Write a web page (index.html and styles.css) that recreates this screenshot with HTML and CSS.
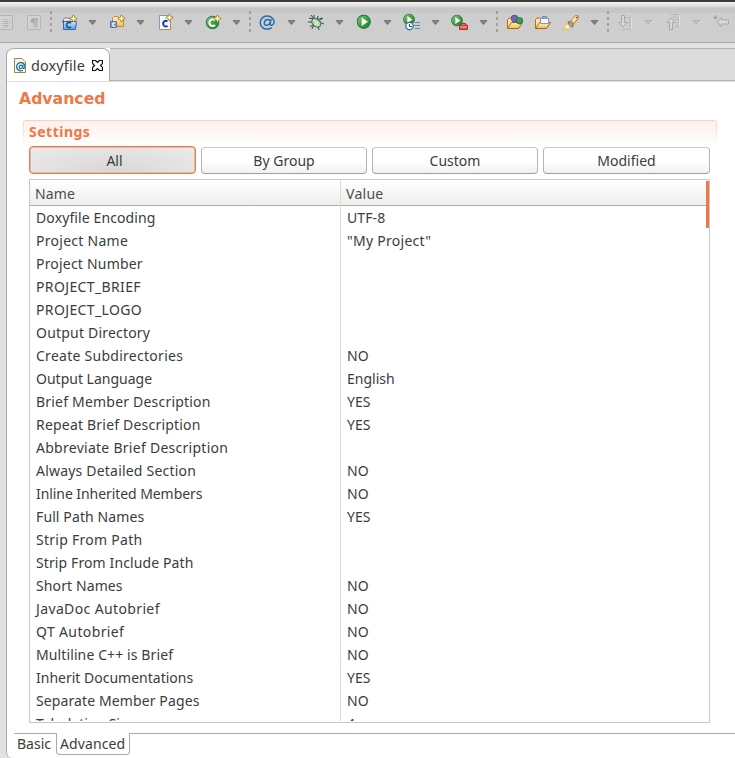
FILE: index.html
```html
<!DOCTYPE html>
<html lang="en">
<head>
<meta charset="utf-8">
<title>doxyfile</title>
<link rel="stylesheet" href="styles.css">
</head>
<body>
<svg class="defs" width="0" height="0">
  <defs>
    <linearGradient id="blue" x1="0" y1="0" x2="0" y2="1"><stop offset="0" stop-color="#d4e6fa"/><stop offset="1" stop-color="#5f9be0"/></linearGradient>
    <linearGradient id="gold" x1="0" y1="0" x2="0" y2="1"><stop offset="0" stop-color="#fff3c4"/><stop offset="1" stop-color="#f3ba5c"/></linearGradient>
    <linearGradient id="green" x1="0" y1="0" x2="1" y2="1"><stop offset="0" stop-color="#8cc885"/><stop offset=".5" stop-color="#43a047"/><stop offset="1" stop-color="#1f7a35"/></linearGradient>
    <symbol id="spark" viewBox="0 0 8 8"><path d="M4 0L5.200 2.800L8 4L5.200 5.200L4 8L2.800 5.200L0 4L2.800 2.800Z" fill="#fff3a8" stroke="#ad831c" stroke-width="1"/><path d="M4 1.500V6.500M1.500 4H6.500" stroke="#fff8c8" stroke-width="1"/></symbol>
    <symbol id="play" viewBox="0 0 14 14"><circle cx="7" cy="7" r="6.400" fill="url(#green)" stroke="#27803a"/><path d="M5 3L11 7L5 11Z" fill="#fff"/></symbol>
    <symbol id="down" viewBox="0 0 24 24"><path d="M8 10.500H15L11.500 14.700Z" fill="#828282" stroke="#707070" stroke-width=".8"/></symbol>
    <symbol id="down-off" viewBox="0 0 24 24"><path d="M8 10.500H15.500L11.800 14.500Z" fill="#c3c3c3" stroke="#aaa" stroke-width=".8"/><path d="M12.500 15L16.300 10.500" stroke="#eee" stroke-width=".8"/></symbol>
    <symbol id="folder" viewBox="0 0 24 24"><path d="M4.500 18.500V9.500L6 8H9.500L11 9.500H17.500V12" fill="#ffe39b" stroke="#b56e20"/><path d="M4.500 18.500L8.500 12.500H19.500L15.500 18.500Z" fill="url(#gold)" stroke="#a9641c"/></symbol>
  </defs>
</svg>
<header class="titlebar"></header>
<nav class="toolbar">
  <svg class="icon first" viewBox="0 0 24 24"><path d="M5.500 5.500H18.500V19.500H5.500Z" fill="#d2d2d2" stroke="#b5b5b5"/><path d="M9 9.500H15M9 17H15M8.500 11V16M15.500 11V16" stroke="#b0b0b0" stroke-dasharray="1 1"/><path d="M10 11.500H14M10 13.500H14M10 15.500H14" stroke="#aaa"/></svg>
  <svg class="icon second" viewBox="0 0 24 24"><path d="M5.500 5.500H18.500V19.500H5.500Z" fill="#d2d2d2" stroke="#b7b7b7"/><path d="M12 8.500H10A2.500 2.500 0 0 0 10 13H12Z" fill="#aaa"/><path d="M10 9H16M12.500 9V17.500M14.800 9V17.500" stroke="#aaa" stroke-width="1.300"/></svg>
  <i class="sep"></i>
  <svg class="icon" viewBox="0 0 24 24"><path d="M6.500 11V9L8 8H12L13 9.500" fill="#eee" stroke="#a96b5c"/><path d="M5 11.500H19.500L18.500 19.500H6.500V12Z" fill="url(#blue)" stroke="#3564b4"/><path d="M14 13.200A2.600 2.600 0 1 0 14 16.800" fill="none" stroke="#175a92" stroke-width="1.700"/><use href="#spark" x="12.500" y="4.500" width="8" height="8"/></svg>
  <svg class="icon" viewBox="0 0 24 24"><use href="#down"/></svg>
  <svg class="icon" viewBox="0 0 24 24"><path d="M7.500 16.500V8L9 6.500H13L14.500 8.500H18.500V16.500Z" fill="url(#gold)" stroke="#cb8a34"/><path d="M5.500 11.500H11.500V17.500H5.500Z" fill="#739bd0" stroke="#4d78b4"/><path d="M10.200 13.200A1.700 1.700 0 1 0 10.200 16" fill="none" stroke="#fff" stroke-width="1.200"/><use href="#spark" x="12.500" y="4.500" width="8" height="8"/></svg>
  <svg class="icon" viewBox="0 0 24 24"><use href="#down"/></svg>
  <svg class="icon" viewBox="0 0 24 24"><path d="M6.500 5.500H17.500V19.500H6.500Z" fill="#f7faff" stroke="#8497b6"/><path d="M17.500 12V19.500H7" fill="none" stroke="#b48f42"/><path d="M14.500 11.500A2.600 2.800 0 1 0 14.500 15.800" fill="none" stroke="#263fb2" stroke-width="2"/><use href="#spark" x="12.500" y="3.500" width="8" height="8"/></svg>
  <svg class="icon" viewBox="0 0 24 24"><use href="#down"/></svg>
  <svg class="icon" viewBox="0 0 24 24"><circle cx="11.500" cy="12.500" r="6.300" fill="url(#green)" stroke="#287b45"/><path d="M14 10.300A3.300 3.300 0 1 0 14 15" fill="none" stroke="#fff" stroke-width="2"/><use href="#spark" x="12.500" y="4.500" width="8" height="8"/></svg>
  <svg class="icon" viewBox="0 0 24 24"><use href="#down"/></svg>
  <i class="sep"></i>
  <svg class="icon" viewBox="0 0 24 24"><path d="M15.800 17.600A7 6.600 0 1 1 18.200 12C18 15.300 14.300 16.300 14.200 14L15 9.200M14.500 12C14 8.300 9 8.700 8.300 12.700C8 16.300 13 16.400 14.500 12" fill="none" stroke="#216fae" stroke-width="1.500"/></svg>
  <svg class="icon" viewBox="0 0 24 24"><use href="#down"/></svg>
  <svg class="icon" viewBox="0 0 24 24"><path d="M10 5V9L5 8M14 6L13 10L18 8M4 12H9M15 12L20 14M6 17L10 14L8 19M14 15L15 20M16 10L19 8M7 5L10 9" fill="none" stroke="#254e4d"/><ellipse cx="12.300" cy="12.800" rx="5" ry="3.700" transform="rotate(42 12.300 12.800)" fill="#b7d59b" stroke="#31636a"/><path d="M9.500 9.500L15 16M14 12L11 15" stroke="#f0f7c7"/></svg>
  <svg class="icon" viewBox="0 0 24 24"><use href="#down"/></svg>
  <svg class="icon" viewBox="0 0 24 24"><use href="#play" x="4.500" y="4.500" width="14.500" height="14.500"/></svg>
  <svg class="icon" viewBox="0 0 24 24"><use href="#down"/></svg>
  <svg class="icon" viewBox="0 0 24 24"><use href="#play" x="3" y="3.500" width="12" height="12"/><circle cx="9.500" cy="16" r="3.700" fill="#fff" stroke="#226b98" stroke-width="1.200"/><path d="M9.500 14V16.500H12" fill="none" stroke="#174b78"/><path d="M15 12.500H20M14 15.500H20M15 18.500H20" stroke="#6483bd"/></svg>
  <svg class="icon" viewBox="0 0 24 24"><use href="#down"/></svg>
  <svg class="icon" viewBox="0 0 24 24"><use href="#play" x="3" y="4.500" width="12" height="12"/><path d="M13.500 15V13.500H17.500V15" fill="none" stroke="#b52c27"/><path d="M11.500 15H19.500V19.500H11.500Z" fill="#d9524a" stroke="#b32e29"/><path d="M12 17H19" stroke="#f6b2a8"/></svg>
  <svg class="icon" viewBox="0 0 24 24"><use href="#down"/></svg>
  <i class="sep"></i>
  <svg class="icon" viewBox="0 0 24 24"><use href="#folder"/><circle cx="11.500" cy="8.500" r="3.300" fill="#7465b0" stroke="#5a4d96"/><circle cx="16.500" cy="10.800" r="3.200" fill="#3e9c59" stroke="#24783f"/></svg>
  <svg class="icon gap" viewBox="0 0 24 24"><use href="#folder"/><path d="M9.500 8.500H17.500V13.500H9.500Z" fill="#f5f8ff" stroke="#7f96bd"/><path d="M11.500 8V6.500H15.500V8" fill="#9fb6d5" stroke="#7189b0"/></svg>
  <svg class="icon gap" viewBox="0 0 24 24"><path d="M11.500 11.500L16.500 5.500L19.500 6L19 9L14.500 14Z" fill="#ffd179" stroke="#b77a24"/><path d="M14 10L17.500 6.500" stroke="#fff1bd" stroke-width="1.500"/><path d="M9 12L12 11.500L14.500 14L13.500 17L10.500 16Z" fill="#a8a09d" stroke="#777071"/><path d="M4 18.500L8 13.500L11.500 17L9.500 19.500Z" fill="#fff3b0" stroke="#e2b560"/><circle cx="17.500" cy="7.500" r=".8" fill="#345"/></svg>
  <svg class="icon" viewBox="0 0 24 24"><use href="#down"/></svg>
  <i class="sep short"></i>
  <svg class="icon" viewBox="0 0 24 24"><path d="M12 7.500H17.500V19.500H9M15 10H18M14 12.500H18M15 15.500H18" fill="none" stroke="#bbb"/><path d="M8.500 5.500H11.500V12.500H14L10 17L6 12.500H8.500Z" fill="#d8d8d8" stroke="#a9a9a9"/><path d="M18.500 8V19" stroke="#e3e3e3"/></svg>
  <svg class="icon" viewBox="0 0 24 24"><use href="#down-off"/></svg>
  <svg class="icon" viewBox="0 0 24 24"><path d="M9 4.500H17.500V16.500H14M11 7H16M13 9.500H18M15 12.500H18" fill="none" stroke="#bbb"/><path d="M8.500 19.500H11.500V12.500H14L10 8L6 12.500H8.500Z" fill="#d8d8d8" stroke="#a9a9a9"/><path d="M18.500 5V16" stroke="#e3e3e3"/></svg>
  <svg class="icon" viewBox="0 0 24 24"><use href="#down-off"/></svg>
  <svg class="icon" viewBox="0 0 24 24"><path d="M8.500 12L12.500 7.500V10H19.500V14H12.500V17Z" fill="#d8d8d8" stroke="#a9a9a9"/><path d="M6.500 5V10M4 7.500H9M5 6L8 9M8 6L5 9" stroke="#a7a7a7" stroke-width=".8"/></svg>
</nav>
<div class="workbench">
  <main class="editor">
    <div class="tabbar">
      <div class="tab">
        <svg class="file-icon" viewBox="0 0 12 15"><path d="M.5 .5H8L11.500 4V14.500H.5Z" fill="#fff8e4" stroke="#a18445"/><path d="M9 12.300A4.200 4.200 0 1 1 11 8.500C10.900 11 8.600 11 8.700 9L9 7M8.700 8.500C8.500 6.500 5.500 6.500 5.200 9.200C5.200 11.500 8.300 11.100 8.700 8.500" fill="none" stroke="#1773b5" stroke-width="1.300"/></svg>
        <span class="tab-label">doxyfile</span>
        <svg class="close" viewBox="0 0 11 11"><path d="M.5 .5H3.500L5.500 2.500L7.500 .5H10.500V3.500L8.500 5.500L10.500 7.500V10.500H7.500L5.500 8.500L3.500 10.500H.5V7.500L2.500 5.500L.5 3.500Z" fill="#fff" stroke="#111" stroke-width="1.200"/></svg>
      </div>
      <div class="tab-rest"></div>
    </div>
    <h1>Advanced</h1>
    <section class="settings">
      <h2><span>Settings</span></h2>
      <div class="filters">
        <button class="on"><span class="all">All</span></button>
        <button><span>By Group</span></button>
        <button><span>Custom</span></button>
        <button><span>Modified</span></button>
      </div>
      <div class="table">
        <div class="row head"><span class="t1">Name</span><span class="t3">Value</span></div>
        <div class="row"><span class="t1">Doxyfile Encoding</span><span class="t1">UTF-8</span></div>
        <div class="row"><span class="t3">Project Name</span><span class="t3">"My Project"</span></div>
        <div class="row"><span class="t2">Project Number</span><span></span></div>
        <div class="row"><span class="t4">PROJECT_BRIEF</span><span></span></div>
        <div class="row"><span class="t4">PROJECT_LOGO</span><span></span></div>
        <div class="row"><span class="t2">Output Directory</span><span></span></div>
        <div class="row"><span class="t3">Create Subdirectories</span><span class="t2">NO</span></div>
        <div class="row"><span>Output Language</span><span>English</span></div>
        <div class="row"><span class="t2">Brief Member Description</span><span>YES</span></div>
        <div class="row"><span class="t2">Repeat Brief Description</span><span>YES</span></div>
        <div class="row"><span class="t3">Abbreviate Brief Description</span><span></span></div>
        <div class="row"><span class="t2">Always Detailed Section</span><span class="t2">NO</span></div>
        <div class="row"><span class="tight">Inline Inherited Members</span><span class="t2">NO</span></div>
        <div class="row"><span class="t1">Full Path Names</span><span>YES</span></div>
        <div class="row"><span class="t3">Strip From Path</span><span></span></div>
        <div class="row"><span class="t1">Strip From Include Path</span><span></span></div>
        <div class="row"><span class="t1">Short Names</span><span class="t2">NO</span></div>
        <div class="row"><span class="t4">JavaDoc Autobrief</span><span class="t2">NO</span></div>
        <div class="row"><span class="t4">QT Autobrief</span><span class="t2">NO</span></div>
        <div class="row"><span class="t1">Multiline C++ is Brief</span><span class="t2">NO</span></div>
        <div class="row"><span>Inherit Documentations</span><span>YES</span></div>
        <div class="row"><span class="t1">Separate Member Pages</span><span class="t2">NO</span></div>
        <div class="row last"><span>Tabulation Size</span><span>4</span></div>
        <i class="thumb"></i>
      </div>
    </section>
    <footer class="pages">
      <span class="page">Basic</span>
      <span class="page current t1">Advanced</span>
      <span class="page-rest"></span>
    </footer>
  </main>
</div>
</body>
</html>
```

FILE: styles.css
```css
* { box-sizing: border-box; }
body {
  margin: 0;
  width: 735px;
  height: 758px;
  overflow: hidden;
  display: flex;
  flex-direction: column;
  background: #e1e1e1;
  color: #3c3c3c;
  font: 14px/23px "Noto Sans", sans-serif;
}
.tight { letter-spacing: -.07px; }
.t1 { letter-spacing: .11px; }
.t2 { letter-spacing: .2px; }
.t3 { letter-spacing: .27px; }
.t4 { letter-spacing: .37px; }
.defs { position: absolute; }
.titlebar { height: 2px; flex: none; background: #3c3b37; }
.toolbar {
  height: 41px;
  flex: none;
  display: flex;
  align-items: flex-start;
  padding-top: 8px;
  overflow: hidden;
  border-bottom: 1px solid #aaa;
  background: linear-gradient(#f2f2f2 0, #dedede 4px, #c7c7c7 6px, #c7c7c7 11px, #cecece 11px);
}
.icon { width: 24px; height: 24px; flex: none; }
.first { margin-left: -6px; }
.second { margin: 0 4px; }
.gap { margin-left: 4px; }
.sep {
  width: 2px;
  height: 22px;
  margin: 1px 5px 0 0;
  flex: none;
  background: repeating-linear-gradient(#a39e97 0 3px, transparent 3px 6px);
}
.sep.short { margin-right: 4px; }
.workbench { flex: 1; display: flex; padding: 5px 0 0 6px; min-height: 0; }
.editor {
  flex: 1;
  display: flex;
  flex-direction: column;
  background: #fff;
  border-left: 1px solid #aaa;
  border-radius: 7px 0 0 6px;
}
.tabbar { height: 34px; flex: none; display: flex; border-bottom: 1px solid #dedede; }
.tab {
  width: 103px;
  display: flex;
  align-items: center;
  padding: 1px 0 0 7px;
  border: solid #aaa;
  border-width: 1px 1px 0 0;
  border-radius: 7px 7px 0 0;
}
.file-icon { width: 12px; height: 15px; margin-right: 5px; flex: none; }
.tab-label { width: 60px; font-size: 14.5px; letter-spacing: .1px; }
.close { width: 11px; height: 11px; flex: none; margin-left: 1px; }
.tab-rest {
  flex: 1;
  border-top: 1px solid #b4b4b4;
  border-bottom: 1px solid #b4b4b4;
  background: #dcdcdc;
}
h1 {
  margin: 7px 0 0 12px;
  height: 20px;
  font: bold 15.7px/20px "DejaVu Sans", sans-serif;
  color: #f07746;
}
.settings { width: 694px; margin: 11px 0 0 16px; }
h2 {
  margin: 0;
  height: 26px;
  padding: 0 0 0 6px;
  font: bold 14px/21px "Noto Sans", sans-serif;
  letter-spacing: .5px;
  color: #f07746;
  border-top: 1px solid #f9d3c2;
  border-radius: 3px 3px 0 0;
  background:
    linear-gradient(#f9d3c2, #fff) left / 1px 100% no-repeat,
    linear-gradient(#f9d3c2, #fff) right / 1px 100% no-repeat,
    linear-gradient(#fdf0eb, #fff);
}
.filters { display: grid; grid-template-columns: 167px 166px 166px 167px; gap: 5px; width: 681px; margin-left: 6px; height: 28px; }
button {
  padding: 0;
  margin-top: 1px;
  font: inherit;
  line-height: 24px;
  color: inherit;
  border: 1px solid #b8b8b8;
  border-color: #c8c8c8 #b4b4b4 #a0a0a0;
  border-radius: 4px;
  background: linear-gradient(#fff 55%, #f0f0f0);
}
button.on {
  margin-top: 0;
  border: 1px solid #df7c58;
  box-shadow: inset 0 0 0 1px #f3b59d;
  background: radial-gradient(ellipse at 50% 100%, #d8d7d6, #ebebea);
}
.all { position: relative; top: 1px; left: 2px; }
.table {
  position: relative;
  width: 681px;
  height: 544px;
  margin: 5px 0 0 6px;
  overflow: hidden;
  border: 1px solid #c8c8c8;
}
.row { display: grid; grid-template-columns: 311px 1fr; height: 23px; white-space: pre; }
.row span { padding-left: 6px; }
.row span:first-child { border-right: 1px solid #dcdcdc; }
.row.head {
  height: 26px;
  line-height: 27px;
  border-bottom: 1px solid #aaa;
  background: linear-gradient(#fff, #efeeed);
  color: #4c4c4c;
}
.row.head span { padding-left: 5px; }
.row.last { height: 9px; overflow: hidden; }
.thumb { position: absolute; top: 1px; right: 0; width: 3px; height: 47px; background: #f07746; }
.pages { display: flex; height: 22px; margin: 10px 0 0 7px; }
.page { width: 42px; padding-left: 3px; line-height: 20px; border-top: 1px solid #aaa; }
.page.current {
  width: 74px;
  line-height: 22px;
  border: 1px solid #aaa;
  border-top: 0;
  border-radius: 0 0 4px 4px;
}
.page-rest { flex: 1; border-top: 1px solid #aaa; }
```
